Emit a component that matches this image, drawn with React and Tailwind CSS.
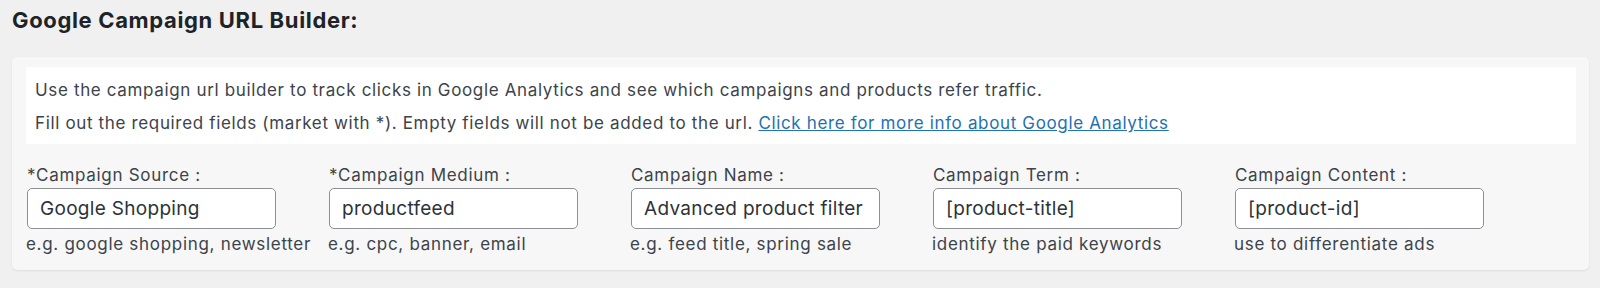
import React from "react";

const fields = [
  { label: "*Campaign Source :", value: "Google Shopping", hint: "e.g. google shopping, newsletter" },
  { label: "*Campaign Medium :", value: "productfeed", hint: "e.g. cpc, banner, email" },
  { label: "Campaign Name :", value: "Advanced product filter", hint: "e.g. feed title, spring sale" },
  { label: "Campaign Term :", value: "[product-title]", hint: "identify the paid keywords" },
  { label: "Campaign Content :", value: "[product-id]", hint: "use to differentiate ads" },
];

export default function App() {
  return (
    <div className="min-h-[288px] bg-[#f0f0f0] px-[12px] pt-[7px] font-['Inter',sans-serif] text-[#3c434a]">
      <h2 className="text-[22px] leading-[26px] font-bold tracking-[0.65px] text-[#1d2327]">Google Campaign URL Builder:</h2>

      <div className="mt-[24px] w-[1577px] rounded-[5px] bg-[#f7f7f7] pl-[14px] pr-[13px] pt-[10px] pb-[15px] shadow-[0_1px_2px_rgba(0,0,0,0.08)]">
        <div className="bg-white pl-[9px] pt-[7px] pb-[4px] text-[17px] leading-[33px] tracking-[0.65px]">
          <p>Use the campaign url builder to track clicks in Google Analytics and see which campaigns and products refer traffic.</p>
          <p>
            Fill out the required fields (market with *). Empty fields will not be added to the url.{" "}
            <a href="#" className="text-[#2271b1] underline">Click here for more info about Google Analytics</a>
          </p>
        </div>

        <div className="mt-[20px] flex">
          {fields.map((f) => (
            <div key={f.label} className="w-[302px] shrink-0 pl-[1px]">
              <div className="text-[17px] leading-[22px] tracking-[0.7px] whitespace-nowrap">{f.label}</div>
              <input
                type="text"
                readOnly
                value={f.value}
                className="mt-[2px] block h-[41px] w-[249px] rounded-[5px] border border-[#8c8f94] bg-white px-[12px] text-[19px] tracking-[0.3px] text-[#2c3338] outline-none"
              />
              <div className="mt-[4px] -ml-[1px] text-[17px] leading-[22px] tracking-[0.7px] whitespace-nowrap">{f.hint}</div>
            </div>
          ))}
        </div>
      </div>
    </div>
  );
}
